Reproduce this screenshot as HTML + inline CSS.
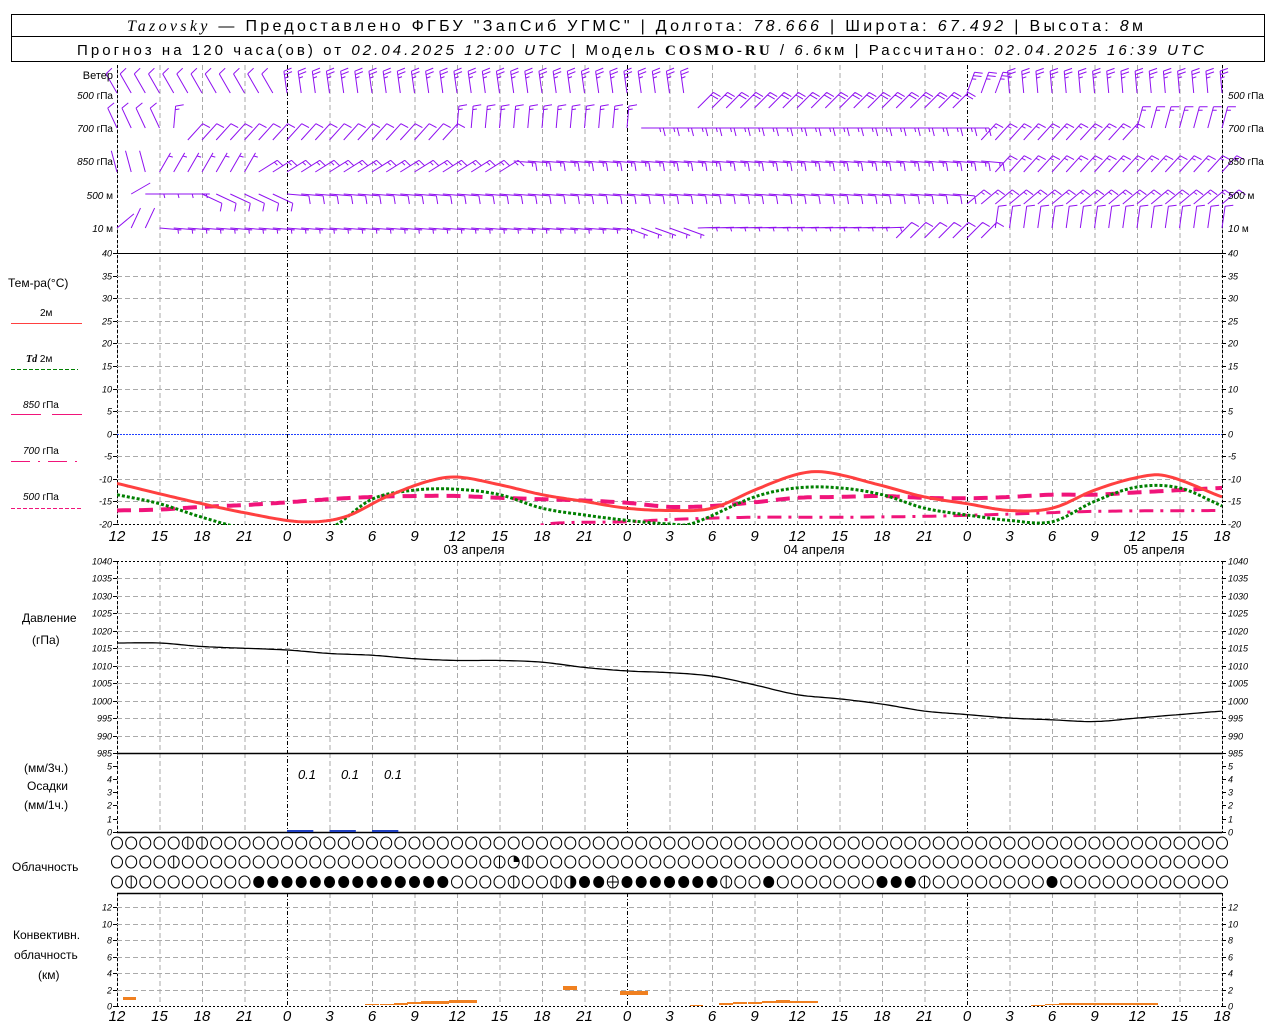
<!DOCTYPE html>
<html><head><meta charset="utf-8"><style>
html,body{margin:0;padding:0;background:#fff;}
svg{display:block;}
text{font-family:"Liberation Sans",sans-serif;}
.t{font-size:9px;font-style:italic;fill:#000;}
</style></head><body>
<svg id="s" width="1280" height="1024" viewBox="0 0 1280 1024" xmlns="http://www.w3.org/2000/svg">
<rect x="11.5" y="14.5" width="1253" height="47" fill="none" stroke="#000"/>
<line x1="11" y1="36.5" x2="1264" y2="36.5" stroke="#000"/>
<text x="127" y="31" font-size="16" textLength="1016" lengthAdjust="spacing"><tspan font-family="Liberation Serif" font-style="italic">Tazovsky</tspan> — Предоставлено ФГБУ "ЗапСиб УГМС" | Долгота: <tspan font-style="italic">78.666</tspan> | Широта: <tspan font-style="italic">67.492</tspan> | Высота: <tspan font-style="italic">8</tspan>м</text>
<text x="77" y="55" font-size="15" textLength="1127" lengthAdjust="spacing">Прогноз на 120 часа(ов) от <tspan font-style="italic">02.04.2025 12:00 UTC</tspan>  | Модель <tspan font-family="Liberation Serif" font-weight="bold">COSMO-RU</tspan> / <tspan font-style="italic">6.6</tspan>км | Рассчитано: <tspan font-style="italic">02.04.2025 16:39 UTC</tspan></text>
<g id="g"></g>
</svg>
<script>
var S='',X0=117,X1=1222,DX=(X1-X0)/78;
function X(h){return X0+h*DX;}
function ln(a,b,c,d,st){S+='<line x1="'+a+'" y1="'+b+'" x2="'+c+'" y2="'+d+'" '+st+'/>';}
function tx(x,y,s,c,a){S+='<text x="'+x+'" y="'+y+'" class="'+c+'"'+(a?' text-anchor="'+a+'"':'')+'>'+s+'</text>';}
var GR='stroke="#aaa" stroke-dasharray="5,3"',BK='stroke="#000" stroke-dasharray="4,2,1,2"';
[[65,524],[561,832],[893,1006]].forEach(function(r){
 for(var h=0;h<=78;h+=3){var x=X(h)+.5;var isz=((h+12)%24==0);ln(x,r[0],x,r[1],isz?BK:GR);}
 ln(X0+.5,r[0],X0+.5,r[1],'stroke="#000" stroke-dasharray="3,2"');ln(X1+.5,r[0],X1+.5,r[1],'stroke="#000" stroke-dasharray="3,2"');
});
function YT(t){return 253+(40-t)*4.517;}
function YP(p){return 561+(1040-p)*3.49;}
function YC(k){return 1006-k*8.25;}
for(var t=-20;t<=40;t+=5){var y=Math.round(YT(t))+.5;
 if(t>-20&&t<40)ln(X0,y,X1,y,t==0?'stroke="#2040ff" stroke-dasharray="2,1"':GR);
 ln(X0-4,y,X0,y,'stroke="#000"');ln(X1,y,X1+4,y,'stroke="#000"');
 tx(X0-5,y+3,t,'t','end');tx(X1+6,y+3,t,'t');}
ln(X0,253.5,X1,253.5,'stroke="#000"');ln(X0,524.5,X1,524.5,'stroke="#000" stroke-dasharray="2,2"');
for(var p=985;p<=1040;p+=5){var y=Math.round(YP(p))+.5;
 if(p>985&&p<1040)ln(X0,y,X1,y,GR);
 ln(X0-4,y,X0,y,'stroke="#000"');ln(X1,y,X1+4,y,'stroke="#000"');
 tx(X0-5,y+3,p,'t','end');tx(X1+6,y+3,p,'t');}
ln(X0,561.5,X1,561.5,'stroke="#000" stroke-dasharray="2,2"');ln(X0,753.5,X1,753.5,'stroke="#000" stroke-width="1.5"');
for(var k=0;k<=5;k++){var y=Math.round(832-k*13.3)+.5;ln(X0-4,y,X0,y,'stroke="#000"');ln(X1,y,X1+4,y,'stroke="#000"');tx(X0-5,y+3,k,'t','end');tx(X1+6,y+3,k,'t');}
ln(X0,832.5,X1,832.5,'stroke="#000" stroke-width="1.5"');ln(X0,893.5,X1,893.5,'stroke="#000" stroke-width="1.5"');
for(var k=0;k<=12;k+=2){var y=Math.round(YC(k))+.5;if(k>0)ln(X0,y,X1,y,GR);ln(X0-4,y,X0,y,'stroke="#000"');ln(X1,y,X1+4,y,'stroke="#000"');tx(X0-5,y+3,k,'t','end');tx(X1+6,y+3,k,'t');}
ln(X0,1006.5,X1,1006.5,'stroke="#000" stroke-dasharray="2,2"');
for(var h=0;h<=78;h+=3){var hr=(h+12)%24;var s='font-size="15" font-style="italic"';
 S+='<text x="'+X(h)+'" y="541" text-anchor="middle" '+s+'>'+hr+'</text>';
 S+='<text x="'+X(h)+'" y="1021" text-anchor="middle" '+s+'>'+hr+'</text>';}
S+='<text x="474" y="554" text-anchor="middle" font-size="13">03 апреля</text><text x="814" y="554" text-anchor="middle" font-size="13">04 апреля</text><text x="1154" y="554" text-anchor="middle" font-size="13">05 апреля</text>';
// Catmull-Rom interpolation
function interp(kp,h){var n=kp.length;for(var i=0;i<n-1;i++){if(h>=kp[i][0]&&h<=kp[i+1][0]){
 var p0=kp[Math.max(i-1,0)],p1=kp[i],p2=kp[i+1],p3=kp[Math.min(i+2,n-1)];
 var dt=p2[0]-p1[0],f=(h-p1[0])/dt;
 var m1=(p2[1]-p0[1])/(p2[0]-p0[0]||1)*dt,m2=(p3[1]-p1[1])/(p3[0]-p1[0]||1)*dt;
 var f2=f*f,f3=f2*f;
 return (2*f3-3*f2+1)*p1[1]+(f3-2*f2+f)*m1+(-2*f3+3*f2)*p2[1]+(f3-f2)*m2;}}return kp[n-1][1];}
function curve(kp,Y,h0,h1,st){var pts=[];for(var h=h0;h<=h1+1e-6;h+=0.25)pts.push(X(h).toFixed(1)+','+Y(interp(kp,h)).toFixed(1));S+='<polyline fill="none" points="'+pts.join(' ')+'" '+st+'/>';}
S+='<clipPath id="ct"><rect x="117" y="253" width="1106" height="272"/></clipPath><g clip-path="url(#ct)">';
var T2=[[0,-11],[3,-13.3],[6,-15.5],[9,-17.5],[13,-19.5],[16,-18.5],[19,-14],[22,-10.5],[24,-9.6],[27,-11.3],[30,-13.5],[33,-15],[36,-16.5],[39,-17],[42,-16.5],[45,-12.5],[48,-9],[50,-8.5],[54,-11.5],[57,-14],[60,-15.5],[63,-17],[66,-16.5],[69,-12.5],[72,-9.7],[74,-9.3],[78,-14]];
var TD=[[0,-13.5],[3,-15.5],[6,-18.5],[9,-21],[12,-22],[15,-21],[18,-14.5],[21,-12.5],[24,-12.3],[27,-13.5],[30,-16.5],[33,-18],[36,-19.2],[39,-20],[40.5,-20],[45,-14],[48,-12],[51,-12],[54,-13.5],[57,-16.5],[60,-18],[63,-19.2],[66,-19.5],[69,-15],[72,-11.8],[75,-12],[78,-16]];
var P8=[[0,-17],[3,-16.8],[6,-16.2],[9,-15.8],[12,-15.2],[15,-14.5],[18,-14],[21,-13.8],[24,-13.8],[27,-14.2],[30,-14.5],[33,-14.8],[36,-15.3],[39,-16.2],[42,-16],[45,-15.2],[48,-14.2],[51,-14],[54,-13.8],[57,-14.2],[60,-14.3],[63,-14],[66,-13.5],[69,-13.5],[72,-13],[75,-12.5],[78,-12]];
var P7=[[0,-22],[28,-21],[31,-19.8],[36,-19.5],[39,-19],[45,-18.5],[51,-18.5],[57,-18.3],[63,-17.8],[69,-17.2],[78,-17]];
curve(P7,YT,0,78,'stroke="#f0147a" stroke-width="3" stroke-dasharray="14,7,3,7"');
curve(P8,YT,0,78,'stroke="#f0147a" stroke-width="4" stroke-dasharray="14,8"');
curve(TD,YT,0,78,'stroke="#008000" stroke-width="3" stroke-dasharray="3,2"');
curve(T2,YT,0,78,'stroke="#ff4040" stroke-width="3"');
S+='</g>';
var PP=[[0,1016.5],[3,1016.5],[6,1015.5],[12,1014.5],[15,1013.5],[18,1013],[21,1012],[24,1011.5],[27,1011.5],[30,1011],[33,1009.5],[36,1008.5],[39,1008],[42,1007],[45,1004.5],[48,1001.7],[51,1000.5],[54,999],[57,997],[60,996],[63,995],[66,994.5],[69,994],[72,995],[75,996],[78,997]];
curve(PP,YP,0,78,'stroke="#000" stroke-width="1.3"');
[[12,14],[15,17],[18,20]].forEach(function(r){S+='<rect x="'+X(r[0])+'" y="830" width="'+(X(r[1])-X(r[0])-2)+'" height="2" fill="#2040c0"/>';});
S+='<text x="307" y="779" font-size="13" font-style="italic" text-anchor="middle">0.1</text><text x="350" y="779" font-size="13" font-style="italic" text-anchor="middle">0.1</text><text x="393" y="779" font-size="13" font-style="italic" text-anchor="middle">0.1</text>';
[[123,997,13,3],[365,1004,14,1],[380,1004,14,1],[394,1003,14,2],[407,1002,14,2],[421,1001,14,3],[435,1001,14,3],[449,1000,14,3],[463,1000,14,3],[563,986,14,4],[620,991,14,4],[634,991,14,4],[690,1005,13,1],[719,1003,14,2],[733,1002,14,2],[748,1002,14,2],[762,1001,14,2],[776,1000,14,3],[790,1001,14,2],[804,1001,14,2],[1031,1005,14,1],[1045,1004,14,1],[1059,1003,99,2]].forEach(function(r){S+='<rect x="'+r[0]+'" y="'+r[1]+'" width="'+r[2]+'" height="'+r[3]+'" fill="#f08020"/>';});
var fill3={};[10,11,12,13,14,15,16,17,18,19,20,21,22,23,33,34,36,37,38,39,40,41,42,46,54,55,56,66].forEach(function(i){fill3[i]=1;});
var vl={'0,5':1,'0,6':1,'1,4':1,'1,27':1,'1,29':1,'2,1':1,'2,28':1,'2,31':1,'2,43':1,'2,57':1};
[843,862,882].forEach(function(y,r){for(var i=0;i<=78;i++){var x=X(i).toFixed(1);
 if(r==2&&fill3[i]){S+='<ellipse cx="'+x+'" cy="'+y+'" rx="5.5" ry="6" fill="#000"/>';continue;}
 S+='<ellipse cx="'+x+'" cy="'+y+'" rx="5.5" ry="6" fill="#fff" stroke="#000"/>';
 if(vl[r+','+i])ln(x,y-6,x,y+6,'stroke="#000"');
 if(r==2&&i==32)S+='<path d="M'+x+' '+(y-6)+' A5.5 6 0 0 1 '+x+' '+(y+6)+'Z" fill="#000"/>';
 if(r==2&&i==35){ln(x,y-6,x,y+6,'stroke="#000"');ln(X(i)-5.5,y,X(i)+5.5,y,'stroke="#000"');}
 if(r==1&&i==28)S+='<path d="M'+x+' '+y+' L'+x+' '+(y-6)+' A5.5 6 0 0 1 '+(X(i)+5.5)+' '+y+'Z" fill="#000"/>';
}});
function barb(x,y,d,n){var r=d*Math.PI/180,ux=Math.sin(r),uy=-Math.cos(r),px=Math.cos(r),py=Math.sin(r),L=22;
 var tx_=x+ux*L,ty=y+uy*L,s='M'+x.toFixed(1)+' '+y.toFixed(1)+'L'+tx_.toFixed(1)+' '+ty.toFixed(1);
 var f=Math.floor(n/2),hf=n%2,pos=0;
 for(var k=0;k<f;k++){var bx=tx_-ux*pos,by=ty-uy*pos;s+='M'+bx.toFixed(1)+' '+by.toFixed(1)+'l'+(px*8+ux*2).toFixed(1)+' '+(py*8+uy*2).toFixed(1);pos+=3.5;}
 if(hf){if(f==0)pos=3.5;var bx=tx_-ux*pos,by=ty-uy*pos;s+='M'+bx.toFixed(1)+' '+by.toFixed(1)+'l'+(px*4+ux*1).toFixed(1)+' '+(py*4+uy*1).toFixed(1);}
 return s;}
function seg(h,arr){for(var i=0;i<arr.length;i++)if(h<arr[i][0])return arr[i];return arr[arr.length-1];}
var rows=[
 [93,[[12,330,2],[41,352,5],[60,45,4],[63,20,5],[79,355,5]]],
 [128,[[4,335,2],[5,5,3],[24,42,2],[37,5,3],[61,90,3],[72,42,3],[79,15,3]]],
 [161,[[3,345,0],[10,30,1],[28,58,3],[62,95,3],[79,42,3]]],
 [194,[[2,60,0],[6,90,1],[12,115,2],[60,95,2],[79,50,3]]],
 [228,[[1,50,0],[3,25,0],[36,95,1],[41,110,1],[55,88,1],[62,45,2],[79,8,2]]]
];
var W='';rows.forEach(function(rw){for(var h=0;h<=78;h++){if(rw[0]==194&&h==0)continue;var a=seg(h,rw[1]);var yy=rw[0];
 if(rw[0]==93&&a[1]==45)yy=108;if(rw[0]==128&&a[1]==42)yy=140;if(rw[0]==161&&a[1]!=95)yy=172;if(rw[0]==194&&a[1]==50)yy=204;if(rw[0]==228&&a[1]==45)yy=238;
 W+=barb(X(h),yy,a[1],a[2]);}});
S+='<path d="'+W+'" fill="none" stroke="#8f10f0" stroke-width="1"/>';
function L(x,y,s,fs){S+='<text x="'+x+'" y="'+y+'" font-size="'+(fs||11)+'">'+s+'</text>';}
S+='<text x="113" y="79" font-size="11" text-anchor="end">Ветер</text>';
[[95,'500 гПа'],[128,'700 гПа'],[161,'850 гПа'],[195,'500 м'],[228,'10  м']].forEach(function(a){var sp=a[1].indexOf(' ');
 var h='<tspan font-style="italic">'+a[1].slice(0,sp)+'</tspan> '+a[1].slice(sp+1);
 S+='<text x="113" y="'+(a[0]+4)+'" font-size="10" text-anchor="end">'+h+'</text>';
 S+='<text x="1228" y="'+(a[0]+4)+'" font-size="10">'+h+'</text>';});
L(8,287,'Тем-ра(°С)',12);L(40,316,'2м',10);ln(11,323.5,82,323.5,'stroke="#ff4040"');
S+='<text x="26" y="362" font-size="10"><tspan font-family="Liberation Serif" font-style="italic" font-weight="bold">Td</tspan>  2м</text>';ln(11,369.5,78,369.5,'stroke="#008000" stroke-dasharray="4,2"');
['850','700','500'].forEach(function(p,i){var y=[408,454,500][i];S+='<text x="23" y="'+y+'" font-size="10"><tspan font-style="italic">'+p+'</tspan> гПа</text>';});
ln(11,414.5,41,414.5,'stroke="#f0147a"');ln(52,414.5,82,414.5,'stroke="#f0147a"');
ln(11,461.5,82,461.5,'stroke="#f0147a" stroke-dasharray="19,8,2,8"');
ln(11,508.5,82,508.5,'stroke="#f0147a" stroke-dasharray="4,2"');
L(22,622,'Давление',12);L(32,644,'(гПа)',12);
L(24,772,'(мм/3ч.)',12);L(27,790,'Осадки',12);L(24,809,'(мм/1ч.)',12);
L(12,871,'Облачность',12);L(13,939,'Конвективн.',12);L(14,959,'облачность',12);L(38,979,'(км)',12);
document.getElementById('g').innerHTML=S;
</script>
</body></html>
